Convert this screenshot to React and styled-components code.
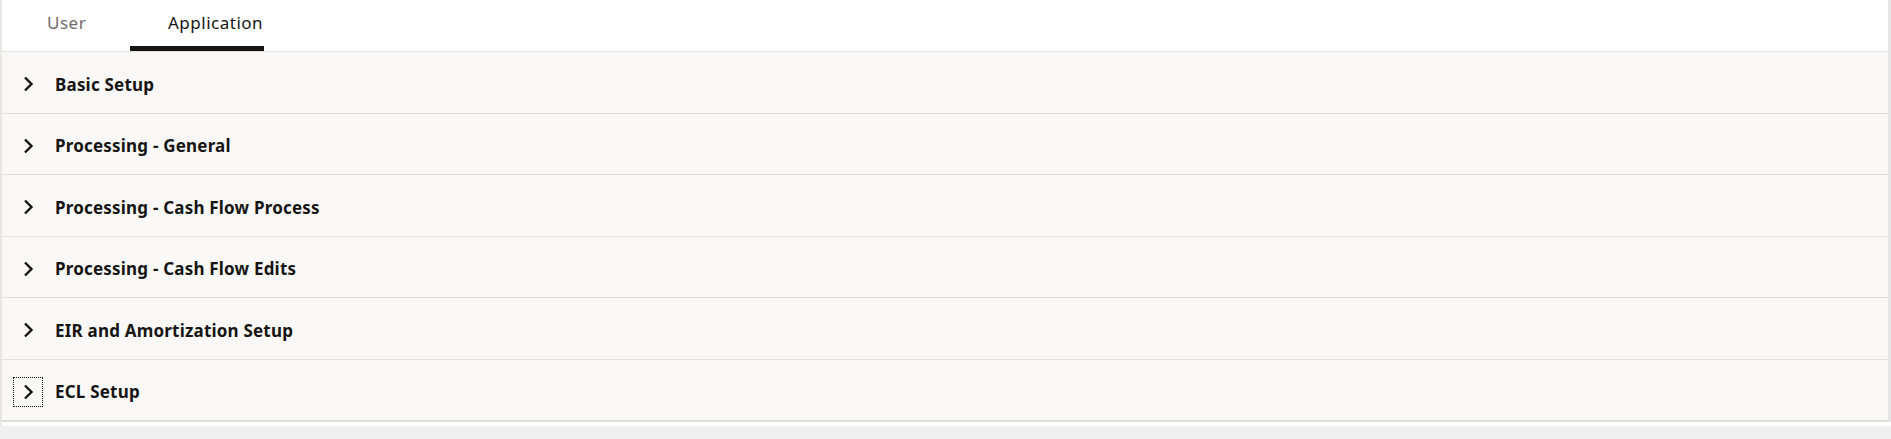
import React, { useState } from "react";
import styled, { createGlobalStyle } from "styled-components";

const sections = [
  "Basic Setup",
  "Processing - General",
  "Processing - Cash Flow Process",
  "Processing - Cash Flow Edits",
  "EIR and Amortization Setup",
  "ECL Setup",
];

export default function App() {
  const [tab, setTab] = useState("application");

  return (
    <>
      <GlobalStyle />
      <Page>
        <TabBar>
          <Tab $pad={45} $width={128} onClick={() => setTab("user")} $active={tab === "user"}>
            User
          </Tab>
          <Tab $pad={38} $width={134} onClick={() => setTab("application")} $active={tab === "application"}>
            Application
          </Tab>
        </TabBar>
        <Panel>
          {sections.map((name, i) => (
            <Row key={name}>
              <Toggle $focused={i === sections.length - 1} aria-label={`Expand ${name}`}>
                <svg width="11" height="16" viewBox="0 0 11 16">
                  <path d="M2 1.5 L8.5 8 L2 14.5" fill="none" stroke="#161513" strokeWidth="2.4" />
                </svg>
              </Toggle>
              <Title>{name}</Title>
            </Row>
          ))}
        </Panel>
        <Footer />
      </Page>
    </>
  );
}

const GlobalStyle = createGlobalStyle`
  body {
    margin: 0;
    background: #f1f0f0;
    font-family: "Noto Sans", "Liberation Sans", sans-serif;
    color: #161513;
  }
`;

// Wrappers //
const Page = styled.div`
  width: 1891px;
  height: 439px;
  display: flex;
  flex-direction: column;
  background: #f1f0f0;
`;
const TabBar = styled.div`
  height: 51px;
  display: flex;
  background: #ffffff;
  border-left: 2px solid #e6e6e6;
  border-right: 3px solid #e6e6e6;
  border-bottom: 1px solid #e2e2e2;
`;
const Panel = styled.section`
  height: 368px;
  display: flex;
  flex-direction: column;
  background: #f9f8f6;
  border-left: 2px solid #e6e6e6;
  border-right: 3px solid #e6e6e6;
  border-top-left-radius: 3px;
  border-bottom: 2px solid #e0dfdc;
`;
const Footer = styled.div`
  height: 4px;
  background: #ffffff;
  border-left: 2px solid #ececec;
`;
////////////////

// Content //
const Tab = styled.button`
  width: ${(p) => p.$width}px;
  padding: 2px 0 4px ${(p) => p.$pad}px;
  border: none;
  border-bottom: 5px solid ${(p) => (p.$active ? "#161513" : "transparent")};
  background: none;
  text-align: left;
  white-space: nowrap;
  font-family: "Noto Sans", "Liberation Sans", sans-serif;
  font-size: 17px;
  letter-spacing: 0.5px;
  color: ${(p) => (p.$active ? "#161513" : "#6f6c69")};
  cursor: pointer;
`;
const Row = styled.div`
  flex: 1;
  display: flex;
  align-items: center;
  gap: 12px;
  padding: 4px 0 0 11px;
  border-bottom: 1px solid #e3e1de;
  &:last-child {
    border-bottom: none;
  }
`;
const Toggle = styled.button`
  width: 30px;
  height: 30px;
  padding: 0;
  display: flex;
  align-items: center;
  justify-content: center;
  background: none;
  border: 1px dotted ${(p) => (p.$focused ? "#161513" : "transparent")};
  cursor: pointer;
`;
const Title = styled.span`
  font-size: 17px;
  font-weight: 700;
  letter-spacing: 0.2px;
`;
